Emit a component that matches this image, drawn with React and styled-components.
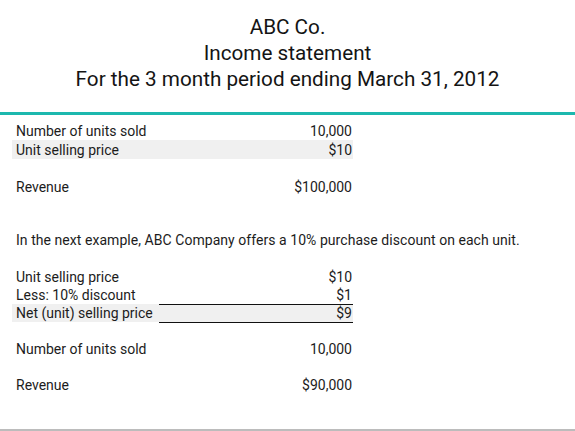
import styled, { createGlobalStyle } from 'styled-components';

const GlobalStyle = createGlobalStyle`
  body {
    margin: 0;
    background: #fff;
    font-family: Roboto, "Liberation Sans", sans-serif;
    color: #1c1c1c;
  }
`

const Page = styled.div`
  width: 575px;
  height: 431px;
  display: flex;
  flex-direction: column;
  border-bottom: 2px solid #bcbcbc;
  box-sizing: border-box;
`

const Header = styled.header`
  padding-top: 14px;
  padding-bottom: 20px;
  border-bottom: 3px solid #1cb8ae;
  text-align: center;
  color: #141414;
  font-size: 20.7px;
  line-height: 26px;
`

const Body = styled.main`
  padding: 6px 0 0 12px;
  font-size: 14px;
`

const Table = styled.table`
  width: 341px;
  border-collapse: collapse;
  margin-bottom: ${p => p.$gap || 0}px;
`

const Row = styled.tr`
  height: ${p => p.$h || 18}px;
  background: ${p => (p.$shade ? '#f0f0f0' : 'transparent')};
`

const Label = styled.td`
  width: 143px;
  padding: 0 0 0 4px;
  white-space: nowrap;
`

const Value = styled.td`
  padding: 0 1px 0 0;
  text-align: right;
  border-top: ${p => (p.$ruleTop ? '1px solid #111' : 'none')};
  border-bottom: ${p => (p.$ruleBottom ? '1px solid #111' : 'none')};
`

const Note = styled.p`
  margin: 0 0 19px 4px;
  line-height: 18px;
  letter-spacing: 0.05px;
`

function App() {
  return (
    <>
      <GlobalStyle />
      <Page>
        <Header>
          <div>ABC Co.</div>
          <div>Income statement</div>
          <div>For the 3 month period ending March 31, 2012</div>
        </Header>
        <Body>
          <Table $gap={35}>
            <tbody>
              <Row $h={19}><Label>Number of units sold</Label><Value>10,000</Value></Row>
              <Row $h={19} $shade><Label>Unit selling price</Label><Value>$10</Value></Row>
              <Row $h={18}><Label /><Value /></Row>
              <Row $h={19}><Label>Revenue</Label><Value>$100,000</Value></Row>
            </tbody>
          </Table>
          <Note>In the next example, ABC Company offers a 10% purchase discount on each unit.</Note>
          <Table>
            <tbody>
              <Row><Label>Unit selling price</Label><Value>$10</Value></Row>
              <Row><Label>Less: 10% discount</Label><Value>$1</Value></Row>
              <Row $shade><Label>Net (unit) selling price</Label><Value $ruleTop $ruleBottom>$9</Value></Row>
              <Row><Label /><Value /></Row>
              <Row><Label>Number of units sold</Label><Value>10,000</Value></Row>
              <Row><Label /><Value /></Row>
              <Row><Label>Revenue</Label><Value>$90,000</Value></Row>
            </tbody>
          </Table>
        </Body>
      </Page>
    </>
  )
}

export default App
